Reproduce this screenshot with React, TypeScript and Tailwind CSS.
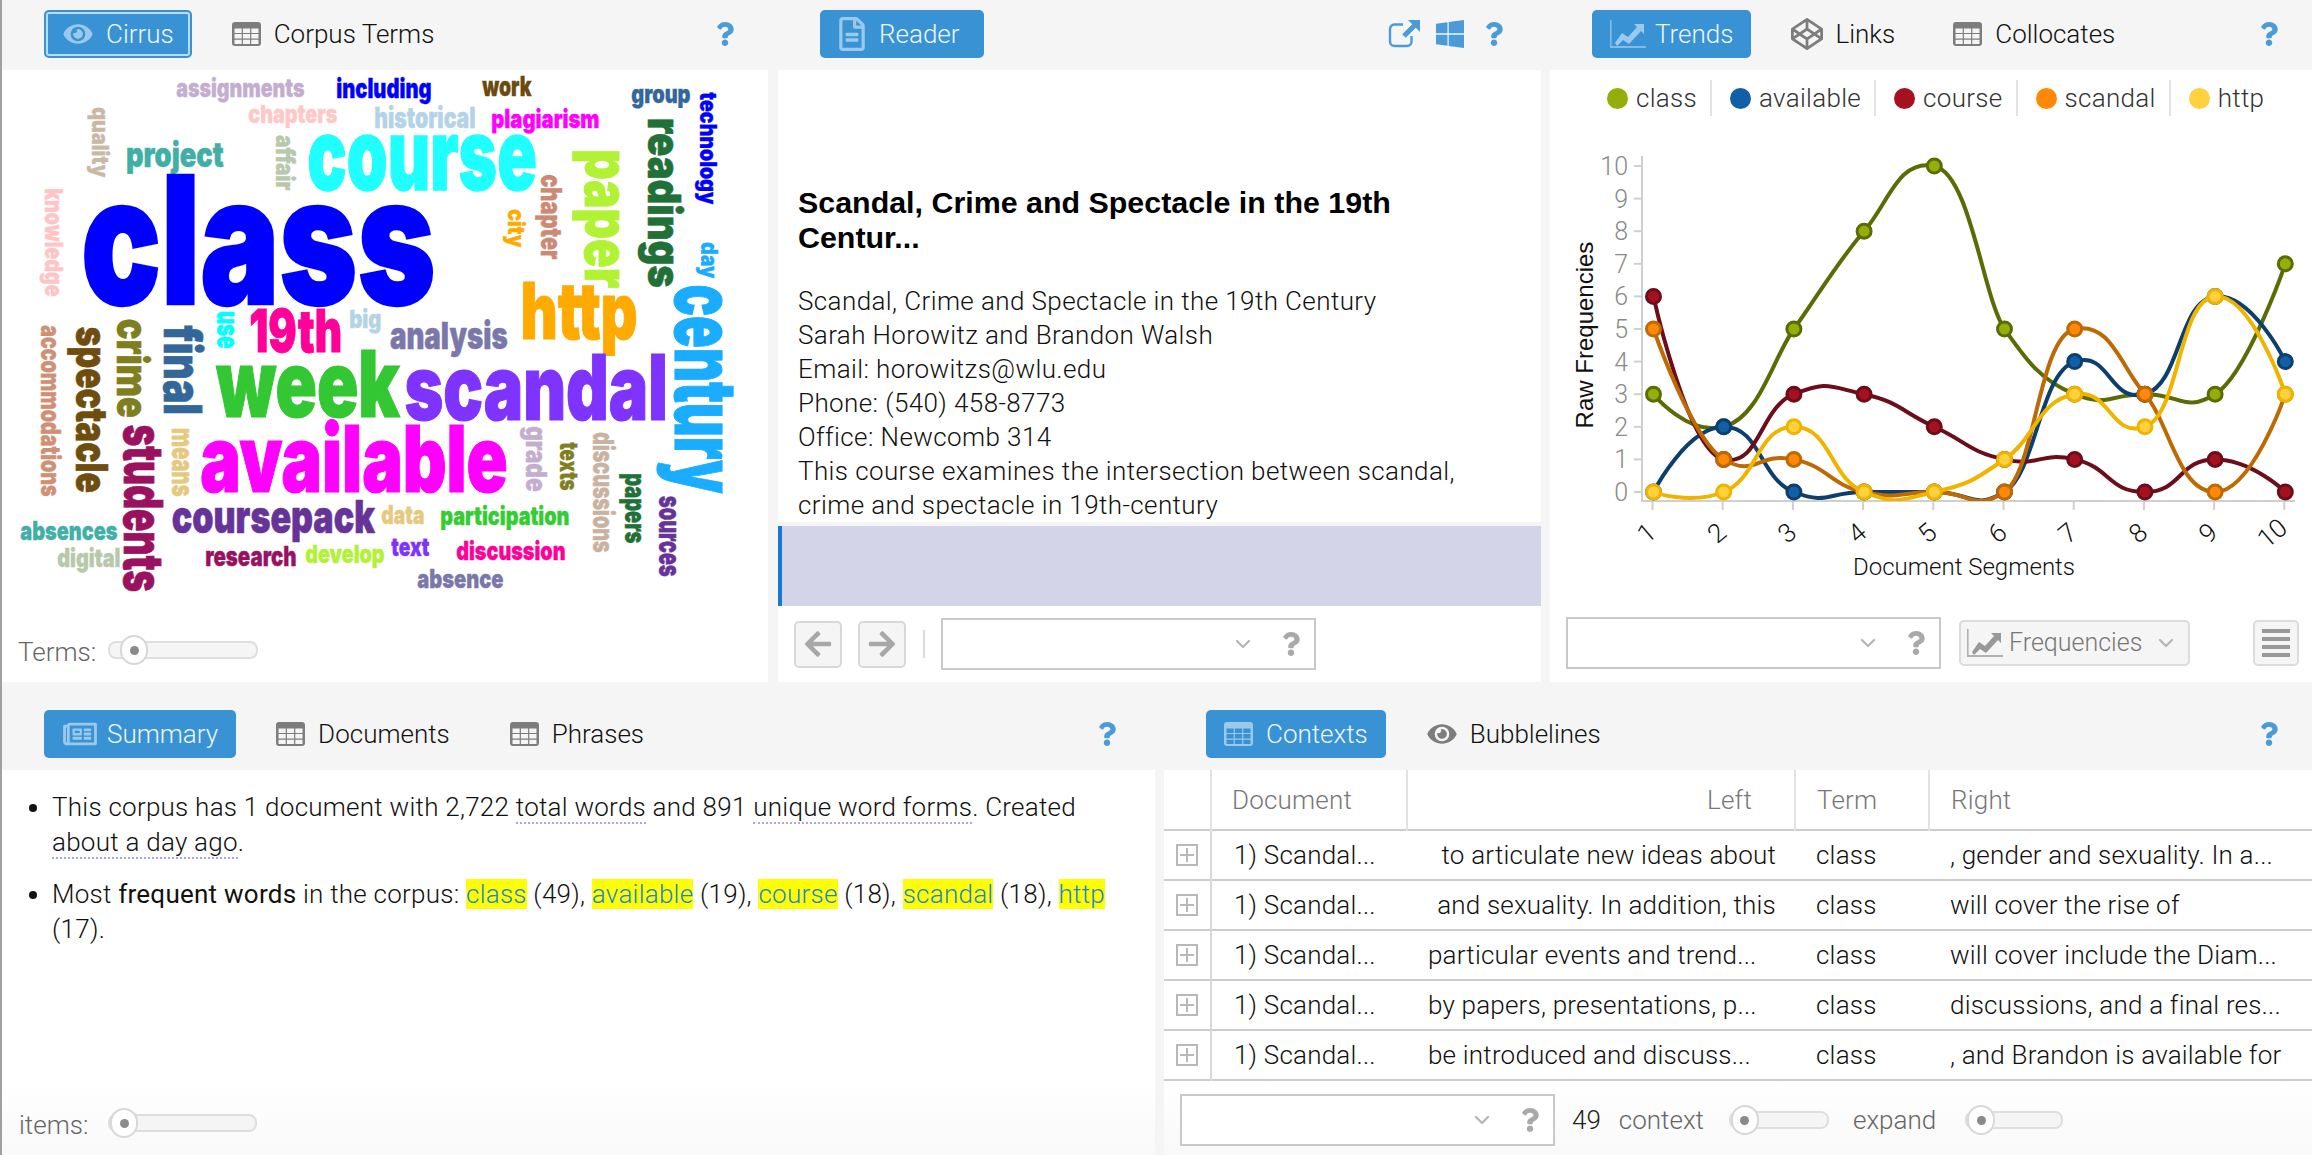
import React from "react";
import { FaEye, FaRegFileAlt, FaRegNewspaper, FaCodepen, FaWindows, FaQuestion, FaArrowLeft, FaArrowRight } from "react-icons/fa";
import { ChevronDown } from "lucide-react";

function TableIcon({ className }: { className?: string }) {
  let d = "M3 0h23a3 3 0 0 1 3 3v18a3 3 0 0 1-3 3H3a3 3 0 0 1-3-3V3a3 3 0 0 1 3-3z";
  for (let r = 0; r < 3; r++) for (let c = 0; c < 3; c++) {
    const x = 2.5 + c * 8.4, y = 6.5 + r * 5.6;
    d += `M${x} ${y}h7.2v4.4h-7.2z`;
  }
  return <svg viewBox="0 0 29 24" className={className}><path d={d} fill="currentColor" fillRule="evenodd" /></svg>;
}

function AreaIcon({ className }: { className?: string }) {
  return (
    <svg viewBox="0 0 36 28" className={className}>
      <path d="M0 0h1.6v26H36v2H0z" fill="currentColor" opacity="0.75" />
      <path d="M5 23l7-10 6 4 9-10-3-3h10v10l-3-3-12 13-6-4-6 6z" fill="currentColor" />
    </svg>
  );
}

function ExternalIcon({ className }: { className?: string }) {
  return (
    <svg viewBox="0 0 32 28" className={className}>
      <path d="M15 4.5H6.5a4.5 4.5 0 0 0-4.5 4.5v12.5a4.5 4.5 0 0 0 4.5 4.5H19a4.5 4.5 0 0 0 4.5-4.5V16" fill="none" stroke="currentColor" strokeWidth="2.4" />
      <path d="M20 0h12v12l-4.2-4.2-10 10-3.6-3.6 10-10z" fill="currentColor" />
    </svg>
  );
}

function Tab({ icon, label, active, focus, className, gap = "gap-[13px]" }: { icon: React.ReactNode; label: string; active?: boolean; focus?: boolean; className?: string; gap?: string }) {
  return (
    <div className={`flex h-12 items-center rounded-[5px] px-[18px] ${gap} ${active ? "bg-[#3892d4] text-[#eef6fc]" : "text-[#111]"} ${focus ? "outline-2 -outline-offset-4 outline-[#b9dbf3]" : ""} ${className ?? ""}`}>
      <span className={`flex items-center ${active ? "text-[#9bc9ec]" : "text-[#7d7d7d]"}`}>{icon}</span>
      <span>{label}</span>
    </div>
  );
}

function Help({ className }: { className?: string }) {
  return <FaQuestion className={`h-[24px] w-[18px] text-[#4a9bd8] ${className ?? ""}`} />;
}

function Slider({ label, width, knob = 0, labelClass }: { label?: string; width: number; knob?: number; labelClass?: string }) {
  return (
    <div className="flex items-center">
      {label && <span className={`text-[#666] ${labelClass ?? ""}`}>{label}</span>}
      <div className="relative h-[18px] rounded-[8px] border-2 border-[#dedede] bg-[#f5f5f5]" style={{ width }}>
        <div className="absolute top-[-8px] flex h-[30px] w-[28px] items-center justify-center rounded-full border-2 border-[#d8d8d8] bg-white" style={{ left: knob }}>
          <span className="h-[9px] w-[9px] rounded-full bg-[#8a8a8a]" />
        </div>
      </div>
    </div>
  );
}

function Combo() {
  return (
    <div className="flex h-[52px] w-[375px] shrink-0 items-center justify-end border-2 border-[#c9c9c9] bg-white pr-[14px]">
      <ChevronDown className="mr-[27px] h-[24px] w-[24px] text-[#b5b5b5]" strokeWidth={2.2} />
      <FaQuestion className="h-[24px] w-[18px] text-[#a9a9a9]" />
    </div>
  );
}

type W = [string, number, number, number, number, string];
// word, x0, x1, baseline, font size, colour
const hWords: W[] = [
  ["assignments", 177, 304, 97, 24, "#c4aed0"],
  ["including", 337, 431, 98, 26, "#0000ff"],
  ["work", 483, 531, 96, 26, "#6b4a0f"],
  ["group", 632, 690, 103, 24, "#336699"],
  ["chapters", 249, 337, 123, 24, "#ffc8c8"],
  ["historical", 375, 475, 128, 27, "#b3d3e6"],
  ["plagiarism", 492, 599, 128, 25, "#ff00ff"],
  ["project", 127, 223, 167, 33, "#41afa6"],
  ["course", 310, 535, 190, 95, "#1fffff"],
  ["class", 86, 432, 304, 170, "#0000ff"],
  ["19th", 251, 341, 352, 57, "#ff0099"],
  ["big", 350, 381, 328, 24, "#b3d3e6"],
  ["analysis", 391, 507, 349, 36, "#7a77ab"],
  ["http", 523, 636, 339, 75, "#ffaa00"],
  ["week", 219, 398, 417, 89, "#33c733"],
  ["scandal", 407, 666, 420, 87, "#7f33ff"],
  ["available", 203, 506, 492, 89, "#ff00ff"],
  ["coursepack", 173, 374, 533, 44, "#663399"],
  ["data", 382, 424, 524, 25, "#e5c97f"],
  ["participation", 441, 569, 525, 24, "#33cc33"],
  ["absences", 21, 117, 540, 25, "#41afa6"],
  ["digital", 58, 120, 567, 25, "#b8c8aa"],
  ["research", 206, 296, 566, 26, "#99115f"],
  ["develop", 306, 384, 563, 24, "#b2f235"],
  ["text", 392, 429, 556, 25, "#7f33ff"],
  ["discussion", 457, 565, 560, 25, "#ff0099"],
  ["absence", 418, 503, 588, 25, "#7a77ab"],
];
// word, y0, y1, baseline x, font size, colour
const vWords: W[] = [
  ["quality", 108, 177, 92, 22, "#cab8a6"],
  ["knowledge", 189, 296, 45, 24, "#ffc4c4"],
  ["affair", 136, 190, 276, 25, "#b8c8aa"],
  ["technology", 93, 204, 700, 22, "#0000ff"],
  ["readings", 119, 287, 648, 44, "#217038"],
  ["paper", 151, 287, 585, 60, "#b2f235"],
  ["chapter", 175, 259, 541, 28, "#cc8a74"],
  ["city", 210, 247, 508, 22, "#ffaa00"],
  ["day", 243, 278, 701, 22, "#1aacff"],
  ["century", 287, 492, 675, 82, "#1aacff"],
  ["use", 312, 348, 217, 30, "#00ffff"],
  ["accommodations", 326, 496, 41, 26, "#cf9076"],
  ["spectacle", 328, 492, 76, 42, "#6f4d0f"],
  ["crime", 320, 417, 117, 42, "#7f7f1f"],
  ["final", 327, 414, 164, 50, "#336699"],
  ["students", 426, 591, 124, 52, "#99115f"],
  ["means", 429, 496, 172, 30, "#e5c97f"],
  ["grade", 427, 491, 526, 27, "#c4aed0"],
  ["texts", 443, 490, 560, 24, "#7f7f1f"],
  ["discussions", 433, 552, 593, 27, "#c9b3a0"],
  ["papers", 474, 543, 625, 28, "#217038"],
  ["sources", 497, 576, 659, 30, "#663399"],
];

function Cloud() {
  const cls = "font-['Inter'] font-black";
  return (
    <svg viewBox="2 70 766 550" className="h-[550px] w-[766px] shrink-0">
      {hWords.map(([t, x0, x1, b, s, c]) => {
        const f = s * 1.04;
        return (
          <text key={t} x={x0 - s * 0.03} y={b} fontSize={f} fill={c} stroke={c} strokeWidth={s * 0.014} textLength={x1 - x0 + s * 0.05} lengthAdjust="spacingAndGlyphs" className={cls}>{t}</text>
        );
      })}
      {vWords.map(([t, y0, y1, b, s, c]) => {
        const f = s * 1.04;
        return (
          <text key={t} transform={`translate(${b} ${y0 - s * 0.03}) rotate(90)`} fontSize={f} fill={c} stroke={c} strokeWidth={s * 0.014} textLength={y1 - y0 + s * 0.05} lengthAdjust="spacingAndGlyphs" className={cls}>{t}</text>
        );
      })}
    </svg>
  );
}

const X = Array.from({ length: 10 }, (_, i) => 1653.5 + i * 70.2);
const Y = (v: number) => 492 - v * 32.6;
const series = [
  { name: "class", data: [3, 2, 5, 8, 10, 5, 3, 3, 3, 7], stroke: "#5c6b06", fill: "#94ae0a" },
  { name: "available", data: [0, 2, 0, 0, 0, 0, 4, 3, 6, 4], stroke: "#0d3f6e", fill: "#115fa6" },
  { name: "course", data: [6, 1, 3, 3, 2, 1, 1, 0, 1, 0], stroke: "#6b0d1b", fill: "#a61120" },
  { name: "scandal", data: [5, 1, 1, 0, 0, 0, 5, 3, 0, 3], stroke: "#bd6a04", fill: "#ff8809" },
  { name: "http", data: [0, 0, 2, 0, 0, 1, 3, 2, 6, 3], stroke: "#f0b400", fill: "#ffd13e" },
];

function smooth(data: number[]) {
  const K = 1.9;
  const pts = data.map((v, i) => [X[i], Y(v)]);
  let d = `M${pts[0][0]} ${pts[0][1]}`;
  const anchors: number[][] = pts.map((p, i) => {
    if (i === 0 || i === pts.length - 1) return [p[0], p[1], p[0], p[1]];
    const [x1, y1] = pts[i - 1];
    const [x2, y2] = p;
    const [x3, y3] = pts[i + 1];
    const l1 = (x2 - x1) / K, l2 = (x3 - x2) / K;
    let a = Math.atan((x2 - x1) / Math.abs(y2 - y1));
    let b = Math.atan((x3 - x2) / Math.abs(y2 - y3));
    a = y1 < y2 ? Math.PI - a : a;
    b = y3 < y2 ? Math.PI - b : b;
    const al = Math.PI / 2 - ((a + b) % (Math.PI * 2)) / 2;
    return [x2 - l1 * Math.sin(al + a), y2 + l1 * Math.cos(al + a), x2 + l2 * Math.sin(al + b), y2 + l2 * Math.cos(al + b)];
  });
  for (let i = 0; i < pts.length - 1; i++) {
    d += `C${anchors[i][2]} ${anchors[i][3]} ${anchors[i + 1][0]} ${anchors[i + 1][1]} ${pts[i + 1][0]} ${pts[i + 1][1]}`;
  }
  return d;
}

function Chart() {
  return (
    <svg viewBox="1550 126 762 480" className="h-[480px] w-[762px] shrink-0">
      <defs>
        <clipPath id="plot"><rect x="1642" y="126" width="660" height="375" /></clipPath>
      </defs>
      <path d="M1642 156V501H2295" fill="none" stroke="#cfcfcf" strokeWidth="2" />
      {Array.from({ length: 11 }, (_, v) => (
        <g key={v}>
          <line x1="1634" x2="1642" y1={Y(v)} y2={Y(v)} stroke="#cfcfcf" strokeWidth="2" />
          <text x="1628" y={Y(v) + 9} textAnchor="end" fontSize="25" fill="#8a8a8a" className="font-['Roboto'] font-light">{v}</text>
        </g>
      ))}
      {X.map((x, i) => (
        <g key={i}>
          <line x1={x - 1} x2={x - 1} y1="501" y2="510" stroke="#cfcfcf" strokeWidth="2" />
          <text transform={`translate(${x - (i === 9 ? 13 : 7)} 533) rotate(-40)`} textAnchor="middle" dominantBaseline="central" fontSize="26" fill="#111" className="font-['Roboto'] font-light">{i + 1}</text>
        </g>
      ))}
      <text x="1964" y="575" textAnchor="middle" fontSize="24" fill="#111" className="font-['Roboto'] font-light">Document Segments</text>
      <text transform="translate(1593 335) rotate(-90)" textAnchor="middle" fontSize="24" fill="#111" className="font-['Liberation_Sans']">Raw Frequencies</text>
      {series.map(s => (
        <g key={s.name}>
          <path d={smooth(s.data)} fill="none" stroke={s.stroke} strokeWidth="4" clipPath="url(#plot)" />
          {s.data.map((v, i) => (
            <circle key={i} cx={X[i]} cy={Y(v)} r="7" fill={s.fill} stroke={s.stroke} strokeWidth="3" />
          ))}
        </g>
      ))}
    </svg>
  );
}

function Legend() {
  return (
    <div className="flex h-[56px] shrink-0 items-center pl-[57px] tracking-[0.3px] text-[#333]">
      {series.map((s, i) => (
        <div key={s.name} className={`flex h-[36px] items-center gap-[8px] ${i > 0 ? "pl-[18px]" : ""} ${i < 4 ? "border-r-2 border-[#e3e3e3] pr-[13px]" : ""}`}>
          <span className="h-[21px] w-[21px] rounded-full" style={{ background: s.fill }} />
          <span>{s.name}</span>
        </div>
      ))}
    </div>
  );
}

const rows = [
  ["to articulate new ideas about", true, ", gender and sexuality. In a..."],
  ["and sexuality. In addition, this", true, "will cover the rise of"],
  ["particular events and trend...", false, "will cover include the Diam..."],
  ["by papers, presentations, p...", false, "discussions, and a final res..."],
  ["be introduced and discuss...", false, ", and Brandon is available for"],
] as const;

function Dotted({ children }: { children: React.ReactNode }) {
  return <span className="border-b-2 border-dotted border-[#a9a5ee]">{children}</span>;
}
function Hit({ children }: { children: React.ReactNode }) {
  return <span className="bg-[#ffff00] text-[#1c86d6]">{children}</span>;
}

export default function App() {
  const tableIcon = <TableIcon className="h-6 w-[29px]" />;
  return (
    <div className="flex h-[1155px] w-[2312px] flex-col overflow-hidden bg-[#f5f5f5] font-['Roboto'] text-[26px] font-light leading-[34px] text-[#111]">
      <div className="flex h-[682px] shrink-0 gap-[10px]">
        {/* Cirrus */}
        <section className="flex w-[768px] flex-col border-l-2 border-[#a0a0a0]">
          <header className="flex h-[70px] shrink-0 items-center pb-[2px] pl-[42px] pr-[34px]">
            <Tab active focus label="Cirrus" icon={<FaEye className="h-[26px] w-[32px]" />} className="mr-[22px]" gap="gap-[12px]" />
            <Tab label="Corpus Terms" icon={tableIcon} />
            <Help className="ml-auto" />
          </header>
          <div className="flex flex-1 flex-col bg-white">
            <Cloud />
            <div className="flex flex-1 items-center pb-[2px] pl-[16px]">
              <Slider label="Terms:" width={150} knob={10} labelClass="mt-[3px] w-[90px] text-[#666]" />
            </div>
          </div>
        </section>
        {/* Reader */}
        <section className="flex w-[763px] flex-col">
          <header className="flex h-[70px] shrink-0 items-center pb-[2px] pl-[42px] pr-[38px]">
            <Tab active label="Reader" icon={<FaRegFileAlt className="h-[34px] w-[28px]" />} className="pr-[24px]" />
            <ExternalIcon className="ml-auto h-[28px] w-[32px] text-[#4a9bd8]" />
            <FaWindows className="ml-[14px] h-[32px] w-[32px] text-[#4a9bd8]" />
            <Help className="ml-[19px]" />
          </header>
          <div className="h-[452px] shrink-0 overflow-hidden bg-white pl-[20px] pr-[60px] pt-[115px] tracking-[0.4px]">
            <h2 className="mb-[29px] font-['Liberation_Sans'] text-[30.4px] font-bold leading-[35px] tracking-normal text-black">Scandal, Crime and Spectacle in the 19th Centur...</h2>
            <p>Scandal, Crime and Spectacle in the 19th Century</p>
            <p>Sarah Horowitz and Brandon Walsh</p>
            <p>Email: horowitzs@wlu.edu</p>
            <p>Phone: (540) 458-8773</p>
            <p>Office: Newcomb 314</p>
            <p>This course examines the intersection between scandal,</p>
            <p>crime and spectacle in 19th-century</p>
          </div>
          <div className="mt-[4px] h-[80px] shrink-0 border-l-4 border-[#1976d2] bg-[#d3d4e8]" />
          <div className="flex flex-1 items-center bg-white pl-[16px]">
            <div className="flex h-[47px] w-[48px] items-center justify-center rounded-[5px] border-2 border-[#d8d8d8] bg-[#f5f5f5]"><FaArrowLeft className="h-[30px] w-[30px] text-[#a8a8a8]" /></div>
            <div className="ml-[16px] flex h-[47px] w-[48px] items-center justify-center rounded-[5px] border-2 border-[#d8d8d8] bg-[#f5f5f5]"><FaArrowRight className="h-[30px] w-[30px] text-[#a8a8a8]" /></div>
            <div className="ml-[17px] mr-[16px] h-[28px] w-[2px] bg-[#dcdcdc]" />
            <Combo />
          </div>
        </section>
        {/* Trends */}
        <section className="-ml-[1px] flex w-[762px] flex-col">
          <header className="flex h-[70px] shrink-0 items-center pb-[2px] pl-[42px] pr-[34px]">
            <Tab active label="Trends" icon={<AreaIcon className="h-[28px] w-[36px]" />} className="mr-[22px]" gap="gap-[9px]" />
            <Tab label="Links" icon={<FaCodepen className="h-[32px] w-[32px]" />} className="mr-[22px]" gap="gap-[12px]" />
            <Tab label="Collocates" icon={tableIcon} />
            <Help className="ml-auto" />
          </header>
          <div className="flex flex-1 flex-col bg-white">
            <Legend />
            <Chart />
            <div className="flex flex-1 items-center pb-[2px] pl-[16px]">
              <Combo />
              <div className="ml-[18px] flex h-[46px] w-[231px] items-center rounded-[5px] border-2 border-[#dcdcdc] bg-[#f5f5f5] pl-[6px] text-[25px] text-[#777]">
                <AreaIcon className="mr-[6px] h-[28px] w-[36px] text-[#999]" />
                <span>Frequencies</span>
                <ChevronDown className="ml-[12px] h-[24px] w-[24px] text-[#b5b5b5]" strokeWidth={2.2} />
              </div>
              <div className="ml-[63px] flex h-[46px] w-[46px] flex-col items-center justify-center gap-[4px] rounded-[5px] border-2 border-[#dcdcdc] bg-[#f5f5f5]">
                <span className="h-[4px] w-[28px] bg-[#999]" />
                <span className="h-[4px] w-[28px] bg-[#999]" />
                <span className="h-[4px] w-[28px] bg-[#999]" />
                <span className="h-[4px] w-[28px] bg-[#999]" />
              </div>
            </div>
          </div>
        </section>
      </div>

      <div className="flex h-[473px] shrink-0 gap-[9px]">
        {/* Summary */}
        <section className="flex w-[1155px] flex-col border-l-2 border-[#a0a0a0]">
          <header className="flex h-[88px] shrink-0 items-center pt-[16px] pl-[42px] pr-[39px]">
            <Tab active label="Summary" icon={<FaRegNewspaper className="h-[30px] w-[36px]" />} className="mr-[22px]" gap="gap-[9px]" />
            <Tab label="Documents" icon={tableIcon} className="mr-[24px]" />
            <Tab label="Phrases" icon={tableIcon} />
            <Help className="ml-auto" />
          </header>
          <div className="flex flex-1 flex-col bg-white">
            <ul className="flex-1 list-disc pl-[50px] pr-[30px] pt-[20px] leading-[34.5px] tracking-[0.25px]">
              <li className="mb-[18px]">This corpus has 1 document with 2,722 <Dotted>total words</Dotted> and 891 <Dotted>unique word forms</Dotted>. Created <Dotted>about a day ago</Dotted>.</li>
              <li>Most <span className="font-normal">frequent words</span> in the corpus: <Hit>class</Hit> (49), <Hit>available</Hit> (19), <Hit>course</Hit> (18), <Hit>scandal</Hit> (18), <Hit>http</Hit> (17).</li>
            </ul>
            <div className="flex h-[72px] items-center bg-gradient-to-b from-white to-[#f9f9f9] pt-[8px] pl-[17px]">
              <Slider label="items:" width={149} knob={0} labelClass="mt-[3px] w-[89px] text-[#666]" />
            </div>
          </div>
        </section>
        {/* Contexts */}
        <section className="flex flex-1 flex-col">
          <header className="flex h-[88px] shrink-0 items-center pt-[16px] pl-[42px] pr-[34px]">
            <Tab active label="Contexts" icon={tableIcon} className="mr-[22px]" />
            <Tab label="Bubblelines" icon={<FaEye className="h-[26px] w-[32px]" />} gap="gap-[12px]" />
            <Help className="ml-auto" />
          </header>
          <div className="flex flex-1 flex-col bg-white">
            <table className="w-full table-fixed border-collapse tracking-[0.2px]">
              <colgroup>
                <col className="w-[47px]" />
                <col className="w-[196px]" />
                <col className="w-[388px]" />
                <col className="w-[134px]" />
                <col />
              </colgroup>
              <thead>
                <tr className="h-[60px] border-b-2 border-[#cccccc] text-left text-[#777]">
                  <th className="border-r-2 border-[#e2e2e2] font-light" />
                  <th className="border-r-2 border-[#e2e2e2] pl-[20px] font-light">Document</th>
                  <th className="border-r-2 border-[#e2e2e2] pr-[42px] text-right font-light">Left</th>
                  <th className="border-r-2 border-[#e2e2e2] pl-[21px] font-light">Term</th>
                  <th className="pl-[21px] font-light">Right</th>
                </tr>
              </thead>
              <tbody>
                {rows.map(([l, right, r], i) => (
                  <tr key={i} className="h-[50px] border-b-2 border-[#cccccc]">
                    <td className="border-r-2 border-[#d8d8d8] pl-[12px]">
                      <span className="relative block h-[22px] w-[22px] border-2 border-[#b8b8b8]">
                        <span className="absolute left-[8px] top-[2px] h-[14px] w-[2px] bg-[#b8b8b8]" />
                        <span className="absolute left-[2px] top-[8px] h-[2px] w-[14px] bg-[#b8b8b8]" />
                      </span>
                    </td>
                    <td className="pl-[22px]">1) Scandal...</td>
                    <td className={right ? "pr-[19px] text-right" : "pl-[21px]"}>{l}</td>
                    <td className="pl-[21px]">class</td>
                    <td className="whitespace-nowrap pl-[21px]">{r}</td>
                  </tr>
                ))}
              </tbody>
            </table>
            <div className="flex flex-1 items-center bg-gradient-to-b from-white to-[#f9f9f9] pl-[16px] pt-[4px]">
              <Combo />
              <span className="ml-[17px] text-[#222]">49</span>
              <span className="ml-[18px] text-[#666]">context</span>
              <div className="ml-[25px]"><Slider width={100} knob={0} /></div>
              <span className="ml-[24px] text-[#666]">expand</span>
              <div className="ml-[29px]"><Slider width={98} knob={0} /></div>
            </div>
          </div>
        </section>
      </div>
    </div>
  );
}
